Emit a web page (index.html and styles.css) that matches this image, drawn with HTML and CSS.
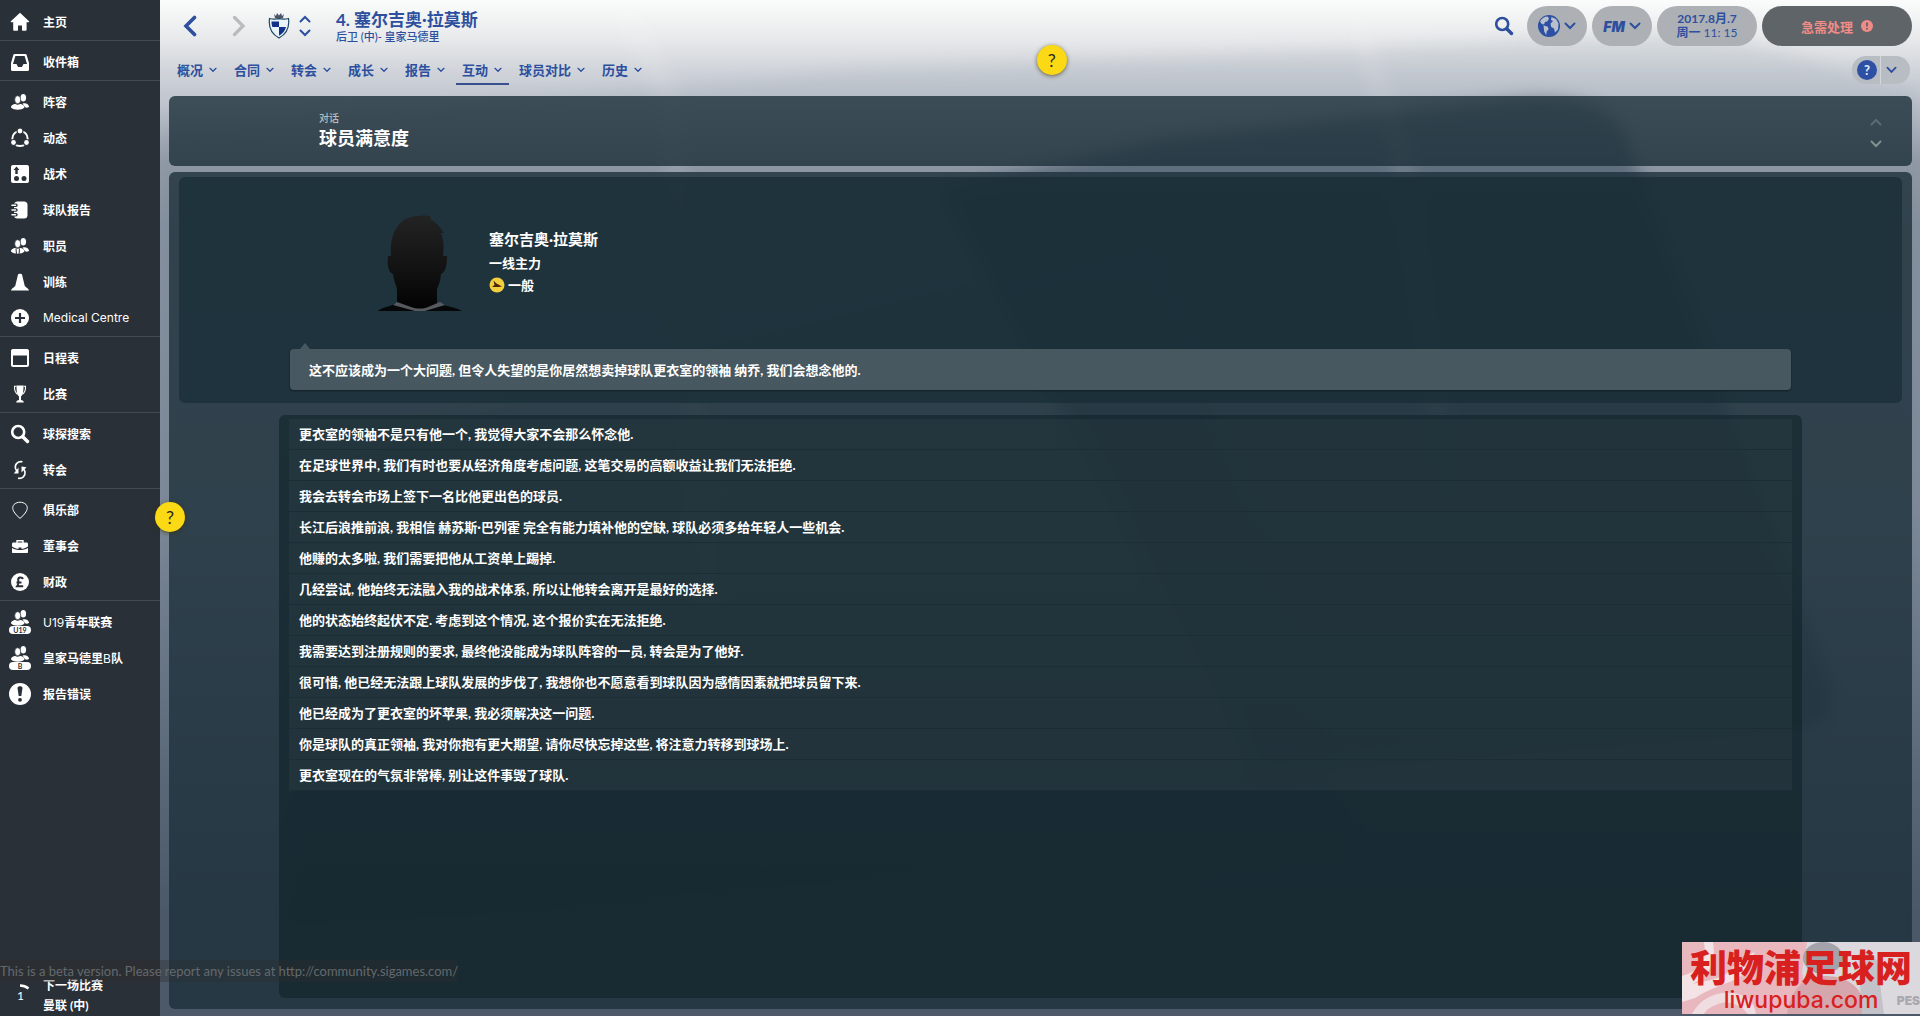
FILE: index.html
```
<!DOCTYPE html>
<html lang="zh-CN">
<head>
  <meta charset="UTF-8" />
  <meta name="viewport" content="width=device-width, initial-scale=1" />
  <title>球员满意度</title>
  <link rel="stylesheet" href="styles.css">
</head>
<body>

  <!-- shared symbols -->
  <svg class="symbols" aria-hidden="true">
    <symbol id="chev-down" viewBox="0 0 12 8"><path d="M1.5 1.5L6 6l4.500-4.500" fill="none" stroke="currentColor" stroke-width="2" stroke-linecap="round"/></symbol>
    <symbol id="chev-up" viewBox="0 0 12 8"><path d="M1.500 6.500L6 2l4.500 4.500" fill="none" stroke="currentColor" stroke-width="2" stroke-linecap="round"/></symbol>
    <symbol id="people" viewBox="0 0 20 20">
      <ellipse cx="13.300" cy="5.800" rx="2.800" ry="3.800"/>
      <path d="M12.500 11.500c3.500-.8 6 .3 6.600 3.300-1.400 1.200-2.800 1-4 .5z"/>
      <ellipse cx="7.700" cy="7.700" rx="3" ry="4" stroke="#2a3037" stroke-width=".7"/>
      <path d="M1 15.500c0-2.400 2.600-3.200 4.300-3.400 1.500 1 3.300 1 4.800 0 2.200.3 4.400 1.200 4.400 3.400-3 3-10.500 3-13.500 0z"/>
    </symbol>
    <symbol id="search" viewBox="0 0 20 20"><circle cx="8.200" cy="8" r="6" fill="none" stroke="currentColor" stroke-width="2.600"/><path d="M13 13l4.500 4.500" stroke="currentColor" stroke-width="3.400" stroke-linecap="round"/></symbol>
  </svg>

  <div class="page">
    <svg class="backdrop" viewBox="0 0 1760 1016" preserveAspectRatio="none" aria-hidden="true">
      <path d="M0 130L700 70l480-20 360-20 220 60v926H0z" fill="#5d6c80" opacity=".1"/>
      <path d="M780 190l220-50 360-42q90-6 106 40l204 550q10 32-30 42L1100 770z" fill="#0d2436" opacity=".34"/>
      <path d="M130 460L1000 240l200 620-1070 60z" fill="#123a36" opacity=".1"/>
      <path d="M440 0l60 100 40 500h20L520 100 480 0zM1180 0l50 150 50 350h20l-50-350L1200 0z" fill="#fff" opacity=".1"/>
    </svg>

    <aside class="sidebar">
      <nav>
        <ul>
          <li><a href="#"><svg viewBox="0 0 20 20"><path d="M10 .8L.8 9.300c-.4.500-.1.900.4.900h2v7.200c0 1 .5 1.400 1.300 1.400h2.800c.5 0 .7-.3.700-.8v-4.500h4V18c0 .5.200.8.700.8h2.600c.900 0 1.300-.5 1.300-1.400v-7.200h2c.5 0 .8-.4.400-.9z"/></svg>主页</a></li>
        </ul>
        <ul>
          <li><a href="#"><svg viewBox="0 0 20 20"><path fill-rule="evenodd" d="M4.500 2h11c.6 0 1 .3 1.200.9L19 11v6.500c0 .9-.5 1.500-1.400 1.500H2.400C1.500 19 1 18.400 1 17.500V11l2.300-8.100c.2-.6.6-.9 1.200-.9zm.9 2L3 12h3.500l1.300 2.500c.2.400.5.500.8.500h2.800c.400 0 .6-.1.800-.5l1.300-2.500H17l-2.400-8z"/></svg>收件箱</a></li>
        </ul>
        <ul>
          <li><a href="#"><svg viewBox="0 0 20 20"><use href="#people"/></svg>阵容</a></li>
          <li><a href="#"><svg viewBox="0 0 20 20"><circle cx="10" cy="10.500" r="7.600" fill="none" stroke="#fff" stroke-width="2"/><g stroke="#2a3037" stroke-width="1.200"><circle cx="10" cy="3" r="3"/><circle cx="3.500" cy="14.500" r="3"/><circle cx="16.500" cy="14.500" r="3"/></g></svg>动态</a></li>
          <li><a href="#"><svg viewBox="0 0 20 20"><rect x="1" y="1" width="18" height="18" rx="2"/><g fill="#2a3037"><path d="M6.500 2.500l3 3.500H7.700v4H5.300V6H3.500z"/><circle cx="6.500" cy="14.500" r="2.500"/><circle cx="14" cy="14.500" r="2.500"/></g></svg>战术</a></li>
          <li><a href="#"><svg viewBox="0 0 20 20"><rect x="4" y="1.500" width="13.500" height="17" rx="3.500"/><g stroke="#2a3037" stroke-width="3.400" stroke-linecap="round"><path d="M3 5.200h3M3 10h3M3 14.800h3"/></g><g stroke="#fff" stroke-width="1.600" stroke-linecap="round"><path d="M2 5.200h3.500M2 10h3.500M2 14.800h3.500"/></g></svg>球队报告</a></li>
          <li><a href="#"><svg viewBox="0 0 20 20"><use href="#people"/><path d="M6 12.500l.5 6M9.500 12.500l-.5 6" stroke="#2a3037"/></svg>职员</a></li>
          <li><a href="#"><svg viewBox="0 0 20 20"><path d="M8 2.500C8.200 1.500 11.800 1.500 12 2.500l2.700 11.300c.3.900 3.800 2.800 4.300 4.700H1c.5-1.900 4-3.800 4.300-4.700z"/></svg>训练</a></li>
          <li><a href="#"><svg viewBox="0 0 20 20"><circle cx="10" cy="10" r="9"/><path d="M10 5v10M5 10h10" stroke="#2a3037" stroke-width="2.200"/></svg><span class="latin">Medical Centre</span></a></li>
        </ul>
        <ul>
          <li><a href="#"><svg viewBox="0 0 20 20"><path fill-rule="evenodd" d="M3 1h14c1.200 0 2 .8 2 2v14c0 1.200-.8 2-2 2H3c-1.200 0-2-.8-2-2V3c0-1.200.8-2 2-2zm0 6.500V17h14V7.500z"/></svg>日程表</a></li>
          <li><a href="#"><svg viewBox="0 0 20 20"><path d="M6.500 1.500h7c0 6-.5 9.500-2.500 11v3.500c1.500.3 2.800.8 2.800 2.500H6.200c0-1.700 1.300-2.200 2.800-2.500v-3.500c-2-1.500-2.500-5-2.500-11z"/><path d="M6.500 2.300h-2c-.2 4.500 1 6.700 3 8M13.500 2.300h2c.2 4.500-1 6.700-3 8" fill="none" stroke="#fff" stroke-width="1.100"/></svg>比赛</a></li>
        </ul>
        <ul>
          <li><a href="#"><svg viewBox="0 0 20 20"><use href="#search"/></svg>球探搜索</a></li>
          <li><a href="#"><svg viewBox="0 0 20 20"><path d="M12.500 1.800C7.500 1 4.500 4.500 5.500 8.500c.3 1 .8 1.800 1.500 2.400M8 18.200c4.500.8 7.500-2.200 7-6.200-.2-1.200-.8-2.200-1.600-2.900" fill="none" stroke="#fff" stroke-width="1.600"/><path d="M8.500 7.500v6H3.800zM11.500 12.500v-6l5 .8z"/></svg>转会</a></li>
        </ul>
        <ul>
          <li><a href="#"><svg viewBox="0 0 20 20"><path d="M10 2.200c2 0 4.500.8 6 2.300 2 2.500 1.500 5.500-.8 8.500-1.400 1.900-3 3.800-5.200 5.400-2.200-1.600-3.800-3.500-5.200-5.400-2.300-3-2.800-6-.8-8.500 1.500-1.500 4-2.300 6-2.300z" fill="none" stroke="#fff"/></svg>俱乐部</a></li>
          <li><a href="#"><svg viewBox="0 0 20 20"><path d="M7 7V4.800h6V7" fill="none" stroke="#fff" stroke-width="1.400"/><path d="M3.500 6.500h13c.900 0 1.500.6 1.500 1.500v2.500c-2.500 1.600-4.500 2.200-6.500 2.400v-1.400h-3v1.400C6.500 12.700 4.500 12.100 2 10.500V8c0-.9.6-1.500 1.500-1.500z"/><path d="M2 12c5 2.800 11 2.800 16 0v4c0 .6-.4 1-1 1H3c-.6 0-1-.4-1-1z"/></svg>董事会</a></li>
          <li><a href="#"><svg viewBox="0 0 20 20"><circle cx="10" cy="10" r="9"/><path d="M13 7c-1-2.300-5-2-4.800.8.200 2 .8 4-1 6.400h6M6.500 10.500h5" fill="none" stroke="#2a3037" stroke-width="2"/></svg>财政</a></li>
        </ul>
        <ul>
          <li><a href="#" class="tagged"><svg viewBox="0 0 20 20"><use href="#people"/></svg><span class="squad-tag">U19</span><span><span class="latin">U19</span>青年联赛</span></a></li>
          <li><a href="#" class="tagged"><svg viewBox="0 0 20 20"><use href="#people"/></svg><span class="squad-tag">B</span><span>皇家马德里<span class="latin">B</span>队</span></a></li>
          <li><a href="#" class="report"><svg viewBox="0 0 22 22"><circle cx="11" cy="11" r="11"/><path d="M8.500 5c0-2.500 5-2.500 5 0L12.300 13H9.700z" fill="#2a3037"/><circle cx="11" cy="16.800" r="1.900" fill="#2a3037"/></svg>报告错误</a></li>
        </ul>
      </nav>

      <div class="next-match">
        <span class="countdown">
          <svg viewBox="0 0 12 6"><path d="M1 1.500c3.500 0 6 1 8.500 3" fill="none" stroke="#fff" stroke-width="2.500"/></svg>
          1
        </span>
        <span>下一场比赛<br>曼联 (中)</span>
      </div>
    </aside>

    <main>
      <header class="topbar">
        <button class="icon-btn back" aria-label="后退"><svg viewBox="0 0 14 22"><path d="M11.500 2.500L3 11l8.500 8.500" fill="none" stroke="currentColor" stroke-width="3.600" stroke-linecap="round"/></svg></button>
        <button class="icon-btn forward" aria-label="前进"><svg viewBox="0 0 14 22"><path d="M2.500 2.500L11 11l-8.500 8.500" fill="none" stroke="currentColor" stroke-width="3.200" stroke-linecap="round"/></svg></button>

        <svg class="crest" viewBox="0 0 22 28">
          <path d="M6 2l2 2 1-3 2 2.500L13 1l1 3 2-2-1 4H7z" fill="#4a5566"/>
          <path d="M1.500 6.500c3 .8 5.500.8 9.500.2 4 .6 6.500.6 9.500-.2 1 7.500-.5 14.500-9.500 19.500C2 21 .5 14 1.500 6.500z" fill="#e9f4fa" stroke="#1c4661" stroke-width="1.200"/>
          <path d="M3.500 9.500H11V15H4.400C3.700 13 3.500 11.500 3.500 9.500zM11 15h7c-1 3.800-3.200 6.500-7 8.800z" fill="#12328a"/>
        </svg>
        <div class="updown">
          <button class="icon-btn" aria-label="上一名球员"><svg viewBox="0 0 12 8"><use href="#chev-up"/></svg></button>
          <button class="icon-btn" aria-label="下一名球员"><svg viewBox="0 0 12 8"><use href="#chev-down"/></svg></button>
        </div>

        <div class="player-title">
          <h1>4. 塞尔吉奥·拉莫斯</h1>
          <p>后卫 (中)- 皇家马德里</p>
        </div>

        <div class="tools">
          <button class="icon-btn search" aria-label="搜索"><svg viewBox="0 0 20 20"><use href="#search"/></svg></button>
          <button class="pill" aria-label="世界">
            <svg class="globe" viewBox="0 0 22 22"><circle cx="11" cy="11" r="11" fill="#2d50a5"/><g fill="#b9c0cb"><path d="M2 6.500C4 3 6.500 1.700 9.500 1.500l1.500 2-1.500 2.800-2.500.7L6 9.500 3.800 9zM5.500 10.500l4 1 1.200 2.500-2 2.500-.5 3.500-2-3.500z"/><path d="M13.500 2l4.500 2 2.500 4.500-.5 6-3 3-1-4-2.800-1.500-.7-3.500 2.500-2.500-2-1z"/></g></svg>
            <svg class="caret" viewBox="0 0 12 8"><use href="#chev-down"/></svg>
          </button>
          <button class="pill"><b class="fm">FM</b><svg class="caret" viewBox="0 0 12 8"><use href="#chev-down"/></svg></button>
          <button class="pill date"><b>2017.8月.7</b><span><b>周一</b> 11: 15</span></button>
          <button class="pill urgent">急需处理 <svg viewBox="0 0 12 12"><circle cx="6" cy="6" r="6" fill="currentColor"/><path d="M6 2.500v4M6 8v1.500" stroke="#5f6469" stroke-width="1.800"/></svg></button>
        </div>
      </header>

      <div class="tabbar">
        <nav class="tabs">
          <a href="#">概况<svg viewBox="0 0 12 8"><use href="#chev-down"/></svg></a>
          <a href="#">合同<svg viewBox="0 0 12 8"><use href="#chev-down"/></svg></a>
          <a href="#">转会<svg viewBox="0 0 12 8"><use href="#chev-down"/></svg></a>
          <a href="#">成长<svg viewBox="0 0 12 8"><use href="#chev-down"/></svg></a>
          <a href="#">报告<svg viewBox="0 0 12 8"><use href="#chev-down"/></svg></a>
          <a href="#" class="active">互动<svg viewBox="0 0 12 8"><use href="#chev-down"/></svg></a>
          <a href="#">球员对比<svg viewBox="0 0 12 8"><use href="#chev-down"/></svg></a>
          <a href="#">历史<svg viewBox="0 0 12 8"><use href="#chev-down"/></svg></a>
        </nav>
        <div class="help">
          <button class="help-mark">?</button>
          <button class="help-more" aria-label="更多帮助"><svg viewBox="0 0 12 8"><use href="#chev-down"/></svg></button>
        </div>
      </div>

      <section class="panel heading">
        <div>
          <p>对话</p>
          <h2>球员满意度</h2>
        </div>
        <div class="updown">
          <button class="icon-btn dim" aria-label="上一个"><svg viewBox="0 0 12 8"><use href="#chev-up"/></svg></button>
          <button class="icon-btn" aria-label="下一个"><svg viewBox="0 0 12 8"><use href="#chev-down"/></svg></button>
        </div>
      </section>

      <section class="panel talk">
        <div class="speaker-card">
          <div class="speaker">
            <svg class="portrait" viewBox="0 0 84 98">
              <defs><linearGradient id="skin" x1="0" y1="0" x2="0" y2="1"><stop offset="0" stop-color="#232323"/><stop offset=".6" stop-color="#111"/><stop offset="1" stop-color="#020202"/></linearGradient></defs>
              <path d="M0 97c4-4 12-4 18-8h44c6 4 16 4 22 8z" fill="#050708"/>
              <path d="M13 42C11 18 22 2 40 2c6-1 12 0 13 1l-1 2c6 3 9 7 14 14l-3 0c3 8 3 15 2 23l4 0c0 8-1 16-6 18-1 12-4 12-4 17v15l-19 4-21-5V77c0-6-3-8-4-17-5-2-6-10-5-18z" fill="url(#skin)"/>
              <path d="M19 88l-4 3 22 6h10l20-6-5-3-12 5c-5 2-11 2-17 0z" fill="#56595e"/>
            </svg>
            <div class="speaker-info">
              <h3>塞尔吉奥·拉莫斯</h3>
              <p>一线主力</p>
              <p class="mood"><svg viewBox="0 0 16 16"><circle cx="8" cy="8" r="7.500" fill="#f2cf3c"/><path d="M4.500 3.500l3 3 5.500 3c-3 .5-6 .8-10 .5l2.500-2z" fill="#4a2508"/></svg>一般</p>
            </div>
          </div>
          <p class="bubble">这不应该成为一个大问题, 但令人失望的是你居然想卖掉球队更衣室的领袖 纳乔, 我们会想念他的.</p>
        </div>

        <ul class="answers">
          <li><button>更衣室的领袖不是只有他一个, 我觉得大家不会那么怀念他.</button></li>
          <li><button>在足球世界中, 我们有时也要从经济角度考虑问题, 这笔交易的高额收益让我们无法拒绝.</button></li>
          <li><button>我会去转会市场上签下一名比他更出色的球员.</button></li>
          <li><button>长江后浪推前浪, 我相信 赫苏斯·巴列霍 完全有能力填补他的空缺, 球队必须多给年轻人一些机会.</button></li>
          <li><button>他赚的太多啦, 我们需要把他从工资单上踢掉.</button></li>
          <li><button>几经尝试, 他始终无法融入我的战术体系, 所以让他转会离开是最好的选择.</button></li>
          <li><button>他的状态始终起伏不定. 考虑到这个情况, 这个报价实在无法拒绝.</button></li>
          <li><button>我需要达到注册规则的要求, 最终他没能成为球队阵容的一员, 转会是为了他好.</button></li>
          <li><button>很可惜, 他已经无法跟上球队发展的步伐了, 我想你也不愿意看到球队因为感情因素就把球员留下来.</button></li>
          <li><button>他已经成为了更衣室的坏苹果, 我必须解决这一问题.</button></li>
          <li><button>你是球队的真正领袖, 我对你抱有更大期望, 请你尽快忘掉这些, 将注意力转移到球场上.</button></li>
          <li><button>更衣室现在的气氛非常棒, 别让这件事毁了球队.</button></li>
        </ul>
      </section>
    </main>
  </div>

  <button class="tip tip-top">?</button>
  <button class="tip tip-side">?</button>

  <p class="beta">This is a beta version. Please report any issues at http://community.sigames.com/</p>

  <div class="watermark">
    <svg viewBox="0 0 238 72" aria-hidden="true">
      <rect width="238" height="72" fill="#dcd9de"/>
      <path d="M0 0h125l-5 30 10 42H0z" fill="#e9b8bf"/>
      <path d="M0 34c20-6 25-14 22-34h9c3 20-2 32-20 42 14-4 28-4 38-14 6-8 14-14 24-18-8 12-4 18-14 24-12 8-28 10-46 22l-13 4z" fill="#f3e3e6"/>
      <path d="M10 72c10-18 28-24 46-20 10 2 16 8 18 20h-8c-8-10-20-14-30-10-8 3-12 6-14 10z" fill="#efdde1"/>
      <ellipse cx="141" cy="16" rx="20" ry="16" fill="#a4a2aa"/>
      <path d="M105 72c4-28 20-38 38-38 24 0 38 12 44 38z" fill="#d5a7ad"/>
      <path d="M176 12c12-6 20 2 20 14l6 46h-22z" fill="#c4c2c9"/>
    </svg>
    <strong>利物浦足球网</strong>
    <span>liwupuba.com</span>
    <em>PES</em>
  </div>

</body>
</html>
```
FILE: styles.css
```
* {
  box-sizing: border-box;
}

body {
  margin: 0;
  position: relative;
  min-height: 100vh;
  font-family: Lato, "Noto Sans CJK SC", sans-serif;
  font-size: 13px;
  color: #fff;
  background: #2a3037;
}

h1, h2, h3, p, ul {
  margin: 0;
  padding: 0;
}

ul {
  list-style: none;
}

a {
  color: inherit;
  text-decoration: none;
}

button {
  font: inherit;
  color: inherit;
  background: none;
  border: none;
  padding: 0;
  cursor: pointer;
}

svg {
  display: block;
}

.symbols {
  position: absolute;
  width: 0;
  height: 0;
}

.page {
  display: grid;
  grid-template-columns: 160px 1fr;
  min-height: 100vh;
  position: relative;
}

.backdrop {
  position: absolute;
  left: 160px;
  top: 0;
  width: calc(100% - 160px);
  height: 100%;
  z-index: 1;
  filter: blur(8px);
  clip-path: inset(0);
}

/* sidebar */

.sidebar {
  display: flex;
  flex-direction: column;
  justify-content: space-between;
  background: #2a3037;
  position: relative;
  z-index: 2;
}

.sidebar ul {
  padding-top: 3px;
  border-bottom: 1px solid #424a52;
}

.sidebar ul:first-child {
  padding-top: 4px;
}

.sidebar ul:last-child {
  border-bottom: none;
}

.sidebar a {
  display: flex;
  align-items: center;
  height: 36px;
  padding: 0 0 1px 10px;
  gap: 13px;
  font-size: 12px;
  font-weight: 700;
  position: relative;
}

.sidebar a svg {
  width: 20px;
  height: 20px;
  fill: #fff;
}

.latin {
  font-family: Inter, sans-serif;
  font-weight: 400;
}

.sidebar a.report {
  padding-left: 9px;
  gap: 12px;
}

.sidebar a.report svg {
  width: 22px;
  height: 22px;
}

.sidebar a.tagged svg {
  margin-bottom: 8px;
}

.squad-tag {
  position: absolute;
  left: 9px;
  bottom: 6px;
  width: 22px;
  height: 8px;
  border-radius: 4px;
  background: #fff;
  color: #2a3037;
  font-size: 7px;
  line-height: 8px;
  text-align: center;
}

.next-match {
  display: flex;
  gap: 14px;
  padding-left: 14px;
  font-size: 12px;
  font-weight: 700;
  line-height: 20px;
}

.countdown {
  width: 15px;
  padding: 8px 0 0 3px;
  line-height: 12px;
  font-weight: 400;
}

.countdown svg {
  width: 12px;
  height: 6px;
  margin: 0 0 0 2px;
}

/* main area */

main {
  display: flex;
  flex-direction: column;
  padding: 0 8px 7px 9px;
  background: linear-gradient(#fbfcfb 0, #e6e8ea 4%, #d0d4da 7%, #c0c5ce 10%, #949ca9 16%, #8792a0 22%, #7f8b9a 50%, #5c6a79 75%, #4a5767 90%, #4d5868);
  min-width: 0;
}

main > * {
  position: relative;
  z-index: 2;
}

.topbar {
  display: flex;
  align-items: center;
  height: 52px;
  padding-left: 14px;
  color: #2d4f9e;
}

.icon-btn svg {
  width: 12px;
  height: 8px;
}

.back svg,
.forward svg {
  width: 14px;
  height: 22px;
}

.forward {
  margin-left: 35px;
  color: #b9bbbe;
}

.crest {
  width: 22px;
  height: 28px;
  margin: 0 9px 0 22px;
}

.updown {
  display: flex;
  flex-direction: column;
  gap: 6px;
}

.player-title {
  margin-left: 25px;
}

.player-title h1 {
  font-size: 17px;
  line-height: 20px;
}

.player-title p {
  font-size: 11px;
  font-weight: 500;
  line-height: 13px;
}

.tools {
  display: flex;
  align-items: center;
  gap: 5px;
  margin-left: auto;
}

.search {
  margin-right: 8px;
}

.search svg {
  width: 20px;
  height: 20px;
}

.pill {
  display: flex;
  align-items: center;
  justify-content: center;
  gap: 4px;
  width: 60px;
  height: 40px;
  border-radius: 20px;
  background: #adb1b5;
}

.globe {
  width: 22px;
  height: 22px;
}

.caret {
  width: 12px;
  height: 8px;
}

.fm {
  font-family: Inter, sans-serif;
  font-size: 14px;
  font-weight: 900;
  font-style: italic;
}

.date {
  flex-direction: column;
  gap: 0;
  width: 100px;
  font-size: 12px;
  line-height: 14px;
}

.urgent {
  width: 150px;
  gap: 8px;
  background: #5f6469;
  color: #f08c88;
  font-weight: 700;
}

.urgent svg {
  width: 12px;
  height: 12px;
}

.tabbar {
  display: flex;
  justify-content: space-between;
  align-items: center;
  height: 44px;
  padding: 0 2px 8px;
  color: #2d4f9e;
}

.tabs {
  display: flex;
  gap: 4px;
}

.tabs a {
  display: flex;
  align-items: center;
  gap: 6px;
  height: 30px;
  padding: 0 7px 0 6px;
  border-bottom: 2px solid transparent;
  font-weight: 700;
}

.tabs a.active {
  border-bottom-color: #3a4f8e;
}

.tabs svg {
  width: 8px;
  height: 6px;
  margin-top: 2px;
}

.help {
  display: flex;
  align-items: center;
  height: 28px;
  border-radius: 14px;
  background: #b8bcc3;
}

.help-mark {
  width: 20px;
  height: 20px;
  margin: 0 3px 0 5px;
  border-radius: 50%;
  background: #2d50a5;
  color: #dfe6f2;
  font-weight: 900;
}

.help-more {
  height: 28px;
  padding: 0 13px 0 5px;
  border-left: 1px solid #d3d6da;
}

.help-more svg {
  width: 11px;
  height: 8px;
}

/* panels */

.panel {
  border-radius: 6px;
  background: rgba(29, 47, 57, 0.8);
}

.heading {
  display: flex;
  align-items: center;
  justify-content: space-between;
  height: 70px;
  margin-bottom: 6px;
  padding: 0 30px 0 150px;
}

.heading p {
  font-size: 10px;
  line-height: 14px;
  color: #b4bdc0;
  font-weight: 500;
}

.heading h2 {
  font-size: 18px;
  line-height: 26px;
}

.heading .updown {
  gap: 14px;
  padding-top: 4px;
  color: #83918f;
}

.heading .dim {
  color: #5b6c72;
}

.talk {
  flex: 1;
  display: flex;
  flex-direction: column;
  gap: 12px;
  padding: 5px 10px 11px;
}

.speaker-card {
  padding: 37px 111px 13px;
  border-radius: 6px;
  background: rgba(21, 43, 52, 0.65);
}

.speaker {
  display: flex;
  gap: 27px;
  margin: 0 0 37px 88px;
}

.portrait {
  width: 84px;
  height: 98px;
}

.speaker-info {
  padding-top: 12px;
  font-weight: 700;
  line-height: 22px;
}

.speaker-info h3 {
  font-size: 15px;
  line-height: 26px;
}

.mood {
  display: flex;
  align-items: center;
  gap: 3px;
}

.mood svg {
  width: 16px;
  height: 16px;
}

.bubble {
  position: relative;
  padding: 1px 19px 0;
  border-radius: 4px;
  background: #475860;
  line-height: 40px;
  font-weight: 700;
  box-shadow: 0 1px 2px rgba(0, 0, 0, 0.4);
}

.bubble::before {
  content: "";
  position: absolute;
  left: 10px;
  top: -6px;
  border: 5px solid transparent;
  border-top: none;
  border-bottom: 6px solid #475860;
}

.answers {
  flex: 1;
  margin: 0 100px;
  padding: 4px 10px;
  border-radius: 6px;
  background: rgba(15, 33, 40, 0.6);
}

.answers button {
  display: block;
  width: 100%;
  height: 31px;
  padding: 0 10px;
  border-bottom: 1px solid #1b2d35;
  background: rgba(255, 255, 255, 0.04);
  background-clip: padding-box;
  font-weight: 700;
  line-height: 28px;
  text-align: left;
}

/* tutorial markers */

.tip {
  position: absolute;
  z-index: 5;
  width: 30px;
  height: 30px;
  border-radius: 50%;
  background: #fbd914;
  box-shadow: 0 1px 4px rgba(60, 50, 0, 0.7);
  color: #2a2a20;
  font-size: 18px;
}

.tip-top {
  left: 54%;
  top: 45px;
}

.tip-side {
  left: 155px;
  top: 502px;
}

.beta {
  position: absolute;
  left: 0;
  bottom: 34px;
  z-index: 4;
  background: rgba(45, 45, 45, 0.35);
  color: #64696d;
  font-size: 13px;
  line-height: 22px;
}

.watermark {
  position: absolute;
  right: 0;
  bottom: 2px;
  z-index: 6;
  display: flex;
  flex-direction: column;
  align-items: center;
  width: 238px;
  height: 72px;
  color: #d8201f;
}

.watermark svg {
  position: absolute;
  inset: 0;
  width: 100%;
  height: 100%;
}

.watermark strong {
  position: relative;
  font-family: "Noto Sans CJK SC", sans-serif;
  font-size: 37px;
  font-weight: 900;
  line-height: 48px;
  white-space: nowrap;
}

.watermark span {
  position: relative;
  font-family: Inter, sans-serif;
  font-size: 23px;
  line-height: 20px;
  font-weight: 500;
}

.watermark em {
  position: absolute;
  right: 0;
  bottom: 6px;
  font: 900 12px/14px Inter, sans-serif;
  color: #a9a8b0;
}
```
